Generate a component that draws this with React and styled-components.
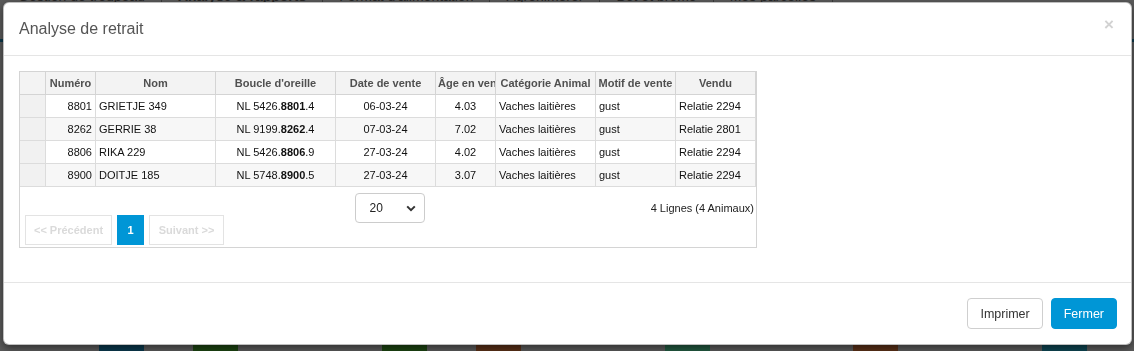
import React from "react";
import styled, { createGlobalStyle } from "styled-components";

const GlobalStyle = createGlobalStyle`
  html, body {
    margin: 0;
    padding: 0;
  }
  body {
    font-family: "Liberation Sans", Arial, sans-serif;
    background: #5b5b5b;
    overflow: hidden;
  }
  * {
    box-sizing: border-box;
  }
`;

const columns = [
  { key: "rn", label: "", width: 26, align: "center" },
  { key: "num", label: "Numéro", width: 50, align: "right" },
  { key: "nom", label: "Nom", width: 120, align: "left" },
  { key: "boucle", label: "Boucle d'oreille", width: 120, align: "center" },
  { key: "date", label: "Date de vente", width: 100, align: "center" },
  { key: "age", label: "Âge en vente", width: 60, align: "center" },
  { key: "cat", label: "Catégorie Animal", width: 100, align: "left" },
  { key: "motif", label: "Motif de vente", width: 80, align: "left" },
  { key: "vendu", label: "Vendu", width: 80, align: "left" },
];

const rows = [
  { num: "8801", nom: "GRIETJE 349", boucle: ["NL 5426.", "8801", ".4"], date: "06-03-24", age: "4.03", cat: "Vaches laitières", motif: "gust", vendu: "Relatie 2294" },
  { num: "8262", nom: "GERRIE 38", boucle: ["NL 9199.", "8262", ".4"], date: "07-03-24", age: "7.02", cat: "Vaches laitières", motif: "gust", vendu: "Relatie 2801" },
  { num: "8806", nom: "RIKA 229", boucle: ["NL 5426.", "8806", ".9"], date: "27-03-24", age: "4.02", cat: "Vaches laitières", motif: "gust", vendu: "Relatie 2294" },
  { num: "8900", nom: "DOITJE 185", boucle: ["NL 5748.", "8900", ".5"], date: "27-03-24", age: "3.07", cat: "Vaches laitières", motif: "gust", vendu: "Relatie 2294" },
];

const tabs = ["Gestion de troupeau", "Analyse & rapports", "Format d'alimentation", "Agrohimerer", "Bet et bromo", "Mes parcelles"];

const tiles = ["#0b3a4f", "#1d4512", null, "#1d4512", "#5b3118", null, "#235b42", null, "#5b3118", null, "#0e4754"];

const gridCols = columns.map(c => c.width + "px").join(" ");

// page behind the backdrop
const Page = styled.div`
  height: 351px;
  display: flex;
  flex-direction: column;
  background: #5b5b5b;
`;

const TabBar = styled.div`
  height: 42px;
  display: flex;
  padding-left: 18px;
  border-bottom: 3px solid #0c3a4c;
`;

const Tab = styled.div`
  margin-top: -12px;
  height: 16px;
  padding: 0 16px;
  font-size: 14px;
  line-height: 16px;
  color: #262626;
  font-weight: ${p => (p.$active ? 700 : 400)};
  border-right: 1px solid #3c3c3c;
  &:first-child {
    padding-left: 0;
  }
`;

const TileRow = styled.div`
  margin-top: auto;
  height: 7px;
  display: flex;
  gap: 49.3px;
  padding-left: 99px;
`;

const Tile = styled.div`
  width: 45px;
  flex: none;
  background: ${p => p.$color || "transparent"};
`;

// modal
const Backdrop = styled.div`
  position: fixed;
  inset: 0;
  padding: 2px 2px 2px 3px;
`;

const Modal = styled.div`
  background: #fff;
  border: 1px solid rgba(0, 0, 0, 0.25);
  border-radius: 6px;
  box-shadow: 0 3px 9px rgba(0, 0, 0, 0.5);
`;

const Header = styled.div`
  display: flex;
  align-items: center;
  justify-content: space-between;
  padding: 15px 17px 15px 15px;
  border-bottom: 1px solid #e5e5e5;
`;

const Title = styled.h4`
  margin: 0;
  font-size: 16px;
  line-height: 22px;
  font-weight: 400;
  color: #555;
`;

const Close = styled.span`
  font-size: 17px;
  line-height: 17px;
  font-weight: 700;
  color: #d2d2d2;
  margin-top: -9px;
`;

const Body = styled.div`
  padding: 15px 15px 34px;
`;

const Grid = styled.div`
  width: 738px;
  border: 1px solid #d4d4d4;
  background: #fff;
`;

const Row = styled.div`
  display: grid;
  grid-template-columns: ${gridCols};
  background: ${p => (p.$head ? "#f3f3f3" : p.$alt ? "#f7f7f7" : "#fff")};
`;

const Cell = styled.div`
  position: relative;
  height: 23px;
  line-height: 22px;
  padding: 0 3px;
  font-size: 11px;
  color: #111;
  text-align: ${p => p.$align};
  white-space: nowrap;
  overflow: hidden;
  border-right: 1px solid #dcdcdc;
  border-bottom: 1px solid #dcdcdc;
  background: ${p => (p.$rn ? "#f1f1f1" : "transparent")};
`;

const HeadCell = styled.div`
  position: relative;
  height: 23px;
  line-height: 22px;
  padding: 0 2px;
  font-size: 11px;
  font-weight: 700;
  color: #505050;
  text-align: center;
  white-space: nowrap;
  overflow: hidden;
  border-right: 1px solid #d4d4d4;
  border-bottom: 1px solid #d4d4d4;
  &::after {
    content: "";
    position: absolute;
    right: -1px;
    bottom: 0;
    width: 1px;
    height: 2px;
    background: #222;
  }
`;

const Pager = styled.div`
  height: 60px;
  display: grid;
  grid-template-columns: 1fr auto 1fr;
  padding: 5px 2px 2px 5px;
`;

const PagerLeft = styled.div`
  align-self: end;
  display: flex;
  gap: 5px;
`;

const PageButton = styled.div`
  height: 30px;
  width: ${p => p.$width}px;
  text-align: center;
  border: 1px solid ${p => (p.$current ? "#0096d6" : "#e3e3e3")};
  background: ${p => (p.$current ? "#0096d6" : "#fff")};
  color: ${p => (p.$current ? "#fff" : "#dadada")};
  font-size: 11px;
  font-weight: 700;
  line-height: 28px;
  white-space: nowrap;
`;

const SelectBox = styled.div`
  width: 70px;
  height: 30px;
  margin-top: 1px;
  border: 1px solid #ccc;
  border-radius: 4px;
  display: flex;
  align-items: center;
  justify-content: space-between;
  padding: 0 8px 0 14px;
  font-size: 12px;
  color: #222;
`;

const Count = styled.div`
  justify-self: end;
  margin-top: 10px;
  font-size: 11px;
  color: #222;
`;

const Footer = styled.div`
  display: flex;
  justify-content: flex-end;
  gap: 8px;
  padding: 15px 14px 15px 15px;
  border-top: 1px solid #e5e5e5;
`;

const Button = styled.button`
  height: 31px;
  padding: 0 12px;
  border-radius: 4px;
  font-family: "Liberation Sans", Arial, sans-serif;
  font-size: 12.5px;
  border: 1px solid ${p => (p.$primary ? "#0096d6" : "#cfcfcf")};
  background: ${p => (p.$primary ? "#0096d6" : "#fff")};
  color: ${p => (p.$primary ? "#fff" : "#333")};
`;

function Chevron () {
  return (
    <svg width="10" height="7" viewBox="0 0 10 7">
      <path d="M1.2 1.4 L5 5.2 L8.8 1.4" fill="none" stroke="#333" strokeWidth="2" />
    </svg>
  );
}

function renderCell (row, key) {
  if (key === "rn") return "";
  if (key === "boucle") {
    return (
      <>
        {row.boucle[0]}
        <b>{row.boucle[1]}</b>
        {row.boucle[2]}
      </>
    );
  }
  return row[key];
}

function App () {
  return (
    <>
      <GlobalStyle />
      <Page>
        <TabBar>
          {tabs.map((t, i) => (
            <Tab key={t} $active={i === 1}>{t}</Tab>
          ))}
        </TabBar>
        <TileRow>
          {tiles.map((c, i) => (
            <Tile key={i} $color={c} />
          ))}
        </TileRow>
      </Page>

      <Backdrop>
        <Modal>
          <Header>
            <Title>Analyse de retrait</Title>
            <Close>×</Close>
          </Header>
          <Body>
            <Grid>
              <Row $head>
                {columns.map(c => (
                  <HeadCell key={c.key}>{c.label}</HeadCell>
                ))}
              </Row>
              {rows.map((r, i) => (
                <Row key={r.num} $alt={i % 2 === 1}>
                  {columns.map(c => (
                    <Cell key={c.key} $align={c.align} $rn={c.key === "rn"}>
                      {renderCell(r, c.key)}
                    </Cell>
                  ))}
                </Row>
              ))}
              <Pager>
                <PagerLeft>
                  <PageButton $width={87}>&lt;&lt; Précédent</PageButton>
                  <PageButton $width={27} $current>1</PageButton>
                  <PageButton $width={75}>Suivant &gt;&gt;</PageButton>
                </PagerLeft>
                <SelectBox>
                  <span>20</span>
                  <Chevron />
                </SelectBox>
                <Count>4 Lignes (4 Animaux)</Count>
              </Pager>
            </Grid>
          </Body>
          <Footer>
            <Button>Imprimer</Button>
            <Button $primary>Fermer</Button>
          </Footer>
        </Modal>
      </Backdrop>
    </>
  );
}

export default App;
